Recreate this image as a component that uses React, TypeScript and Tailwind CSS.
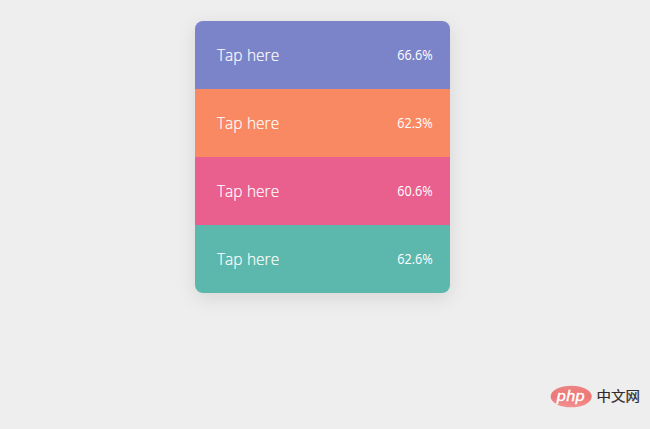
const rows = [
  { color: 'bg-[#7b83c9]', value: '66.6%' },
  { color: 'bg-[#f98963]', value: '62.3%' },
  { color: 'bg-[#e95f8e]', value: '60.6%' },
  { color: 'bg-[#5cb7ac]', value: '62.6%' },
];

function Brand() {
  return (
    <div className="absolute right-2.5 bottom-[21px] flex items-center gap-[5px]">
      <svg width="42" height="23" viewBox="0 0 42 23" aria-hidden="true">
        <defs>
          <linearGradient id="brand" x1="0" y1="0" x2="0" y2="1">
            <stop offset="0" stopColor="#eb8583" />
            <stop offset="0.5" stopColor="#ee7776" />
            <stop offset="1" stopColor="#f19291" />
          </linearGradient>
        </defs>
        <ellipse cx="21.2" cy="11.5" rx="20.5" ry="10.8" fill="url(#brand)" />
        <text
          x="20.8"
          y="16"
          textAnchor="middle"
          textLength="28"
          lengthAdjust="spacingAndGlyphs"
          fill="#fff"
          stroke="#fff"
          strokeWidth="0.3"
          className="font-['Roboto',sans-serif] text-[15.5px] font-normal italic"
        >
          php
        </text>
      </svg>
      <svg width="43" height="23" viewBox="0 0 43 23">
        <text
          x="-0.5"
          y="16"
          textLength="43.5"
          lengthAdjust="spacingAndGlyphs"
          fill="#302c2c"
          stroke="#302c2c"
          strokeWidth="0.2"
          className="font-['Noto_Sans_CJK_SC',sans-serif] text-[13.5px] font-normal"
        >
          中文网
        </text>
      </svg>
    </div>
  );
}

export default function App() {
  return (
    <main className="relative flex h-[429px] w-[650px] flex-col items-start overflow-hidden bg-[#eeeeee] pt-[21px] pl-[195px] font-['Open_Sans',sans-serif] text-white">
      <div className="w-[255px] overflow-hidden rounded-lg shadow-[0_5px_20px_rgba(0,0,0,0.1)]">
        {rows.map(({ color, value }) => (
          <div
            key={color}
            className={`flex h-[68px] items-center justify-between pr-[17.5px] pl-[22px] ${color}`}
          >
            <span className="origin-left scale-x-[0.91] text-[17px] font-light [-webkit-text-stroke:0.2px_white] [word-spacing:0.5px]">
              Tap here
            </span>
            <span className="origin-right scale-x-[0.87] text-[14.5px]">{value}</span>
          </div>
        ))}
      </div>
      <Brand />
    </main>
  );
}
